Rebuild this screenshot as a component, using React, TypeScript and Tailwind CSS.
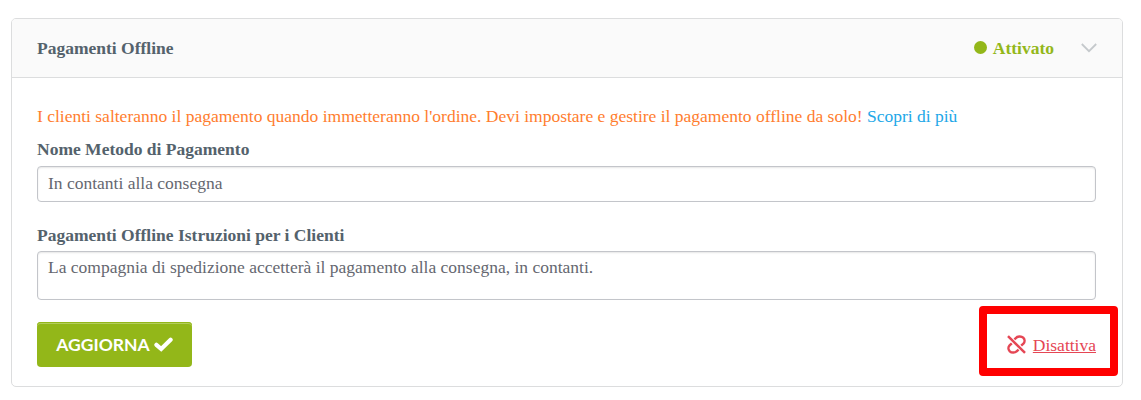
import { useState } from "react";

const CheckIcon = () => (
  <svg className="h-[15px] w-[19px] shrink-0" viewBox="0 0 19 15" fill="none">
    <path
      d="M2.4 7.8L7.2 12L16.6 2.8"
      stroke="currentColor"
      strokeWidth="4.2"
      strokeLinecap="round"
    />
  </svg>
);

const UnlinkIcon = () => (
  <svg
    className="h-[19px] w-[19px]"
    viewBox="0 0 19 19"
    fill="none"
    stroke="currentColor"
    strokeWidth="2.5"
  >
    <path d="M7.4 4.4L9.4 2.6C11 1.1 14.4 0.9 16.2 2.6C18.1 4.5 17.8 7.2 16.4 8.6L14.2 10.6" />
    <path d="M11.6 14.6L9.6 16.4C8 17.9 4.6 18.1 2.8 16.4C0.9 14.5 1.2 11.8 2.6 10.4L4.8 8.4" />
    <path d="M1 1.2L18 17.8" />
  </svg>
);

const ChevronIcon = () => (
  <svg className="h-[10px] w-4" viewBox="0 0 16 10" fill="none">
    <path d="M0.8 1L8 8.2L15.2 1" stroke="#c5c9cc" strokeWidth="1.8" />
  </svg>
);

export default function App() {
  const [name, setName] = useState("In contanti alla consegna");
  const [instructions, setInstructions] = useState(
    "La compagnia di spedizione accetterà il pagamento alla consegna, in contanti."
  );

  return (
    <div className="h-[400px] bg-white pt-[18px] pl-[11px] font-['Liberation_Serif',serif] text-[17.5px] leading-6">
      <section className="h-[369px] w-[1112px] rounded-[5px] border border-[#dcddde]">
        <header className="flex h-[59px] items-center justify-between rounded-t-[4px] border-b border-[#dcddde] bg-[#fafafa] pr-[25px] pl-[25px] font-bold">
          <h2 className="text-[#54626c]">Pagamenti Offline</h2>
          <div className="flex items-center text-[#93b719]">
            <span className="mr-1.5 -mt-0.5 h-[13px] w-[13px] rounded-full bg-[#93b719]" />
            <span>Attivato</span>
            <span className="ml-[27px]">
              <ChevronIcon />
            </span>
          </div>
        </header>

        <div className="flex flex-col px-[25px] pt-[26px]">
          <p className="whitespace-nowrap text-[#ff7d2e]">
            I clienti salteranno il pagamento quando immetteranno l'ordine. Devi impostare e gestire
            il pagamento offline da solo!{" "}
            <a href="#" className="text-[#22a7e8]">
              Scopri di più
            </a>
          </p>

          <label htmlFor="name" className="mt-[9px] font-bold text-[#54626c]">
            Nome Metodo di Pagamento
          </label>
          <input
            id="name"
            className="mt-[5px] h-9 w-[1059px] rounded-[4px] border border-[#c3c5ca] px-2.5 pb-0.5 text-[#656770] shadow-[inset_0_1px_2px_rgba(0,0,0,0.1)] outline-none"
            value={name}
            onChange={(e) => setName(e.target.value)}
          />

          <label htmlFor="instructions" className="mt-[21px] font-bold text-[#54626c]">
            Pagamenti Offline Istruzioni per i Clienti
          </label>
          <textarea
            id="instructions"
            className="mt-1 h-[49px] w-[1059px] resize-none rounded-[4px] border border-[#c3c5ca] px-2.5 py-[3px] text-[#656770] shadow-[inset_0_1px_2px_rgba(0,0,0,0.1)] outline-none"
            value={instructions}
            onChange={(e) => setInstructions(e.target.value)}
          />

          <div className="mt-[22px] flex h-[45px] w-[1059px] items-center justify-between">
            <button className="flex h-[45px] w-[155px] items-center justify-center gap-1 rounded-[4px] bg-[#93b719] font-['Lato',sans-serif] text-[17.5px] font-bold text-white shadow-[inset_0_1px_0_#93b719,inset_0_2px_0_#b3cd5c]">
              AGGIORNA <CheckIcon />
            </button>
            <div className="relative">
              <a href="#" className="flex items-center gap-[7px] text-[#e54654]">
                <UnlinkIcon />
                <span className="underline">Disattiva</span>
              </a>
              <div className="pointer-events-none absolute -top-[27px] -right-[22px] h-[70px] w-[139px] rounded-[4px] border-8 border-[#ff0000]" />
            </div>
          </div>
        </div>
      </section>
    </div>
  );
}
